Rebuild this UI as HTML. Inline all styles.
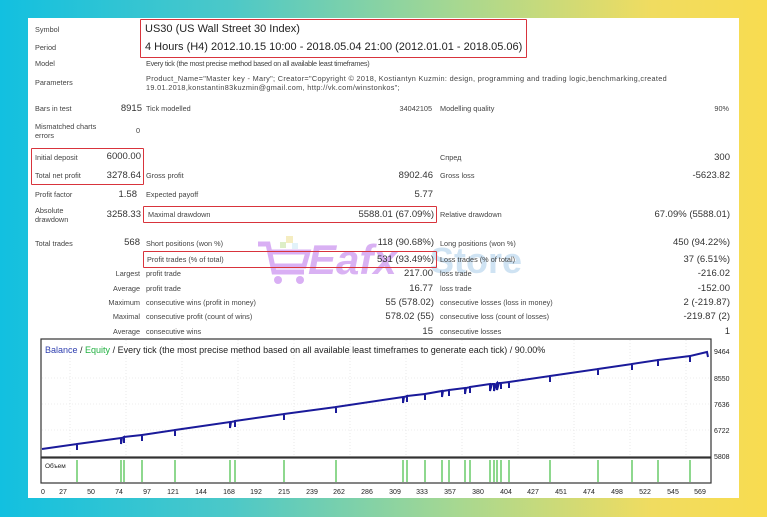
<!DOCTYPE html>
<html><head><meta charset="utf-8"><style>
*{margin:0;padding:0;box-sizing:border-box}
body{width:767px;height:517px;overflow:hidden;background:linear-gradient(90deg,#12c0e0 0%,#4cc8c8 30%,#a8d890 60%,#f0dc60 85%,#f8dc50 100%);font-family:"Liberation Sans",sans-serif;position:relative}
.card{position:absolute;left:28px;top:18px;width:711px;height:480px;background:#fff}
.t{position:absolute;font-size:7.3px;color:#444;white-space:nowrap;line-height:9px}
.r{text-align:right}
.v{font-size:9.5px;color:#333;line-height:11px}
.big{font-size:11px;color:#222;position:absolute;white-space:nowrap}
.box{position:absolute;border:1.6px solid #d8343c;border-radius:1px}
</style></head><body>
<div class="card"></div>
<!-- watermark -->
<svg style="position:absolute;left:256px;top:234px;opacity:.7" width="60" height="52" viewBox="0 0 60 52">
<g fill="none" stroke="#c98ef0" stroke-width="5"><path d="M2 10 L12 10 L18 38 L48 38"/><path d="M14 18 L52 18 L48 32 L17 32"/></g>
<circle cx="22" cy="46" r="4" fill="#c98ef0"/><circle cx="44" cy="46" r="4" fill="#c98ef0"/>
<rect x="30" y="2" width="7" height="7" fill="#f2e6a8"/><rect x="24" y="8" width="6" height="6" fill="#cfe8b0"/><rect x="36" y="9" width="6" height="6" fill="#d7edf7"/>
</svg>
<div style="position:absolute;left:308px;top:236px;font:italic bold 42px 'Liberation Sans',sans-serif;color:#c688ee;opacity:.65">Eafx</div>
<div style="position:absolute;left:430px;top:240px;font:bold 36px 'Liberation Sans',sans-serif;color:#a9cdea;opacity:.55">Store</div>

<div class="t" style="left:35px;top:25px">Symbol</div>
<div class="big" style="left:145px;top:23px">US30 (US Wall Street 30 Index)</div>
<div class="t" style="left:35px;top:43px">Period</div>
<div class="big" style="left:145px;top:41px">4 Hours (H4) 2012.10.15 10:00 - 2018.05.04 21:00 (2012.01.01 - 2018.05.06)</div>
<div class="box" style="left:140px;top:19px;width:387px;height:39px"></div>
<div class="t" style="left:35px;top:59px">Model</div>
<div class="t" style="left:146px;top:59px;letter-spacing:-0.3px">Every tick (the most precise method based on all available least timeframes)</div>
<div class="t" style="left:35px;top:78px">Parameters</div>
<div class="t" style="left:146px;top:74px;letter-spacing:0.33px">Product_Name="Master key - Mary"; Creator="Copyright © 2018, Kostiantyn Kuzmin: design, programming and trading logic,benchmarking,created</div>
<div class="t" style="left:146px;top:83px;letter-spacing:0.33px">19.01.2018,konstantin83kuzmin@gmail.com, http://vk.com/winstonkos";</div>

<div class="t" style="left:35px;top:104px">Bars in test</div>
<div class="t r v" style="left:90px;top:103px;width:52px">8915</div>
<div class="t" style="left:146px;top:104px">Tick modelled</div>
<div class="t r" style="left:370px;top:104px;width:62px">34042105</div>
<div class="t" style="left:440px;top:104px">Modelling quality</div>
<div class="t r" style="left:660px;top:104px;width:69px">90%</div>
<div class="t" style="left:35px;top:122px">Mismatched charts<br>errors</div>
<div class="t r" style="left:100px;top:126px;width:40px">0</div>

<div class="t" style="left:35px;top:153px">Initial deposit</div>
<div class="t r v" style="left:80px;top:151px;width:61px">6000.00</div>
<div class="t" style="left:440px;top:153px">Спред</div>
<div class="t r v" style="left:660px;top:152px;width:70px">300</div>
<div class="t" style="left:35px;top:171px">Total net profit</div>
<div class="t r v" style="left:80px;top:170px;width:61px">3278.64</div>
<div class="box" style="left:31px;top:148px;width:113px;height:37px"></div>
<div class="t" style="left:146px;top:171px">Gross profit</div>
<div class="t r v" style="left:360px;top:170px;width:73px">8902.46</div>
<div class="t" style="left:440px;top:171px">Gross loss</div>
<div class="t r v" style="left:640px;top:170px;width:90px">-5623.82</div>
<div class="t" style="left:35px;top:190px">Profit factor</div>
<div class="t r v" style="left:90px;top:189px;width:47px">1.58</div>
<div class="t" style="left:146px;top:190px">Expected payoff</div>
<div class="t r v" style="left:380px;top:189px;width:53px">5.77</div>
<div class="t" style="left:35px;top:206px">Absolute<br>drawdown</div>
<div class="t r v" style="left:80px;top:209px;width:61px">3258.33</div>
<div class="t" style="left:148px;top:210px">Maximal drawdown</div>
<div class="t r v" style="left:330px;top:209px;width:104px">5588.01 (67.09%)</div>
<div class="box" style="left:143px;top:206px;width:294px;height:17px"></div>
<div class="t" style="left:440px;top:210px">Relative drawdown</div>
<div class="t r v" style="left:600px;top:209px;width:130px">67.09% (5588.01)</div>

<div class="t" style="left:35px;top:239px">Total trades</div>
<div class="t r v" style="left:100px;top:237px;width:40px">568</div>
<div class="t" style="left:146px;top:239px">Short positions (won %)</div>
<div class="t r v" style="left:330px;top:237px;width:104px">118 (90.68%)</div>
<div class="t" style="left:440px;top:239px">Long positions (won %)</div>
<div class="t r v" style="left:600px;top:237px;width:130px">450 (94.22%)</div>
<div class="t" style="left:147px;top:255px">Profit trades (% of total)</div>
<div class="t r v" style="left:330px;top:254px;width:104px">531 (93.49%)</div>
<div class="box" style="left:143px;top:251px;width:294px;height:17px"></div>
<div class="t" style="left:440px;top:255px">Loss trades (% of total)</div>
<div class="t r v" style="left:600px;top:254px;width:130px">37 (6.51%)</div>
<div class="t r" style="left:60px;top:269px;width:80px">Largest</div>
<div class="t" style="left:146px;top:269px">profit trade</div>
<div class="t r v" style="left:360px;top:268px;width:73px">217.00</div>
<div class="t" style="left:440px;top:269px">loss trade</div>
<div class="t r v" style="left:640px;top:268px;width:90px">-216.02</div>
<div class="t r" style="left:60px;top:284px;width:80px">Average</div>
<div class="t" style="left:146px;top:284px">profit trade</div>
<div class="t r v" style="left:360px;top:283px;width:73px">16.77</div>
<div class="t" style="left:440px;top:284px">loss trade</div>
<div class="t r v" style="left:640px;top:283px;width:90px">-152.00</div>
<div class="t r" style="left:60px;top:298px;width:80px">Maximum</div>
<div class="t" style="left:146px;top:298px">consecutive wins (profit in money)</div>
<div class="t r v" style="left:330px;top:297px;width:104px">55 (578.02)</div>
<div class="t" style="left:440px;top:298px">consecutive losses (loss in money)</div>
<div class="t r v" style="left:600px;top:297px;width:130px">2 (-219.87)</div>
<div class="t r" style="left:60px;top:312px;width:80px">Maximal</div>
<div class="t" style="left:146px;top:312px">consecutive profit (count of wins)</div>
<div class="t r v" style="left:330px;top:311px;width:104px">578.02 (55)</div>
<div class="t" style="left:440px;top:312px">consecutive loss (count of losses)</div>
<div class="t r v" style="left:600px;top:311px;width:130px">-219.87 (2)</div>
<div class="t r" style="left:60px;top:327px;width:80px">Average</div>
<div class="t" style="left:146px;top:327px">consecutive wins</div>
<div class="t r v" style="left:360px;top:326px;width:73px">15</div>
<div class="t" style="left:440px;top:327px">consecutive losses</div>
<div class="t r v" style="left:640px;top:326px;width:90px">1</div>

<svg style="position:absolute;left:0;top:0" width="767" height="517">
<g stroke="#ddd" stroke-width="0.6" stroke-dasharray="1,2">
<line x1="42" y1="378" x2="710" y2="378"/><line x1="42" y1="404" x2="710" y2="404"/><line x1="42" y1="430" x2="710" y2="430"/>
<line x1="70" y1="340" x2="70" y2="456"/><line x1="126" y1="340" x2="126" y2="456"/><line x1="182" y1="340" x2="182" y2="456"/><line x1="238" y1="340" x2="238" y2="456"/><line x1="294" y1="340" x2="294" y2="456"/><line x1="350" y1="340" x2="350" y2="456"/><line x1="406" y1="340" x2="406" y2="456"/><line x1="462" y1="340" x2="462" y2="456"/><line x1="518" y1="340" x2="518" y2="456"/><line x1="574" y1="340" x2="574" y2="456"/><line x1="630" y1="340" x2="630" y2="456"/><line x1="686" y1="340" x2="686" y2="456"/>
</g>
<rect x="41" y="339" width="670" height="118" fill="none" stroke="#333" stroke-width="1.2"/>
<rect x="41" y="458" width="670" height="25" fill="none" stroke="#333" stroke-width="1.2"/>
<polyline fill="none" stroke="#1a1a9a" stroke-width="2" points="42,449 77,444 77,450 77,444 121,438 121,444 122,438 124,437 124,443 124,437 142,435 142,441 142,435 175,430 175,436 175,430 230,422 230,428 231,422 235,421 235,427 235,421 284,414 284,420 284,414 336,407 336,413 336,407 403,397 403,403 404,397 407,396 407,402 407,396 425,394 425,400 425,394 442,391 442,397 443,391 449,390 449,396 449,390 465,388 465,394 466,388 470,387 470,393 470,387 490,384 490,391 492,384 494,384 494,391 496,384 497,383 497,390 499,383 501,383 501,389 501,383 509,382 509,388 509,382 550,376 550,382 550,376 598,369 598,375 598,369 632,364 632,370 632,364 658,360 658,366 658,360 690,356 690,362 690,356 707,352 708,357"/>
<g stroke="#1cb01c" stroke-width="1">
<line x1="77" y1="460" x2="77" y2="482"/><line x1="121" y1="460" x2="121" y2="482"/><line x1="124" y1="460" x2="124" y2="482"/><line x1="142" y1="460" x2="142" y2="482"/><line x1="175" y1="460" x2="175" y2="482"/><line x1="230" y1="460" x2="230" y2="482"/><line x1="235" y1="460" x2="235" y2="482"/><line x1="284" y1="460" x2="284" y2="482"/><line x1="336" y1="460" x2="336" y2="482"/><line x1="403" y1="460" x2="403" y2="482"/><line x1="407" y1="460" x2="407" y2="482"/><line x1="425" y1="460" x2="425" y2="482"/><line x1="442" y1="460" x2="442" y2="482"/><line x1="449" y1="460" x2="449" y2="482"/><line x1="465" y1="460" x2="465" y2="482"/><line x1="470" y1="460" x2="470" y2="482"/><line x1="490" y1="460" x2="490" y2="482"/><line x1="494" y1="460" x2="494" y2="482"/><line x1="497" y1="460" x2="497" y2="482"/><line x1="501" y1="460" x2="501" y2="482"/><line x1="509" y1="460" x2="509" y2="482"/><line x1="550" y1="460" x2="550" y2="482"/><line x1="598" y1="460" x2="598" y2="482"/><line x1="632" y1="460" x2="632" y2="482"/><line x1="658" y1="460" x2="658" y2="482"/><line x1="690" y1="460" x2="690" y2="482"/>
</g>
<text x="45" y="353" font-family="Liberation Sans" font-size="9" fill="#222"><tspan fill="#3040b0">Balance</tspan> / <tspan fill="#20b040">Equity</tspan> / Every tick (the most precise method based on all available least timeframes to generate each tick) / 90.00%</text>
<text x="45" y="468" font-family="Liberation Sans" font-size="6.5" fill="#222">Объем</text>
<g font-family="Liberation Sans" font-size="7" fill="#222">
<text x="714" y="354">9464</text><text x="714" y="381">8550</text><text x="714" y="407">7636</text><text x="714" y="433">6722</text><text x="714" y="459">5808</text>
</g>
<g font-family="Liberation Sans" font-size="7" fill="#222" text-anchor="middle">
<text x="43" y="494">0</text><text x="63" y="494">27</text><text x="91" y="494">50</text><text x="119" y="494">74</text><text x="147" y="494">97</text><text x="173" y="494">121</text><text x="201" y="494">144</text><text x="229" y="494">168</text><text x="256" y="494">192</text><text x="284" y="494">215</text><text x="312" y="494">239</text><text x="339" y="494">262</text><text x="367" y="494">286</text><text x="395" y="494">309</text><text x="422" y="494">333</text><text x="450" y="494">357</text><text x="478" y="494">380</text><text x="506" y="494">404</text><text x="533" y="494">427</text><text x="561" y="494">451</text><text x="589" y="494">474</text><text x="617" y="494">498</text><text x="645" y="494">522</text><text x="673" y="494">545</text><text x="700" y="494">569</text>
</g>
</svg>
</body></html>
